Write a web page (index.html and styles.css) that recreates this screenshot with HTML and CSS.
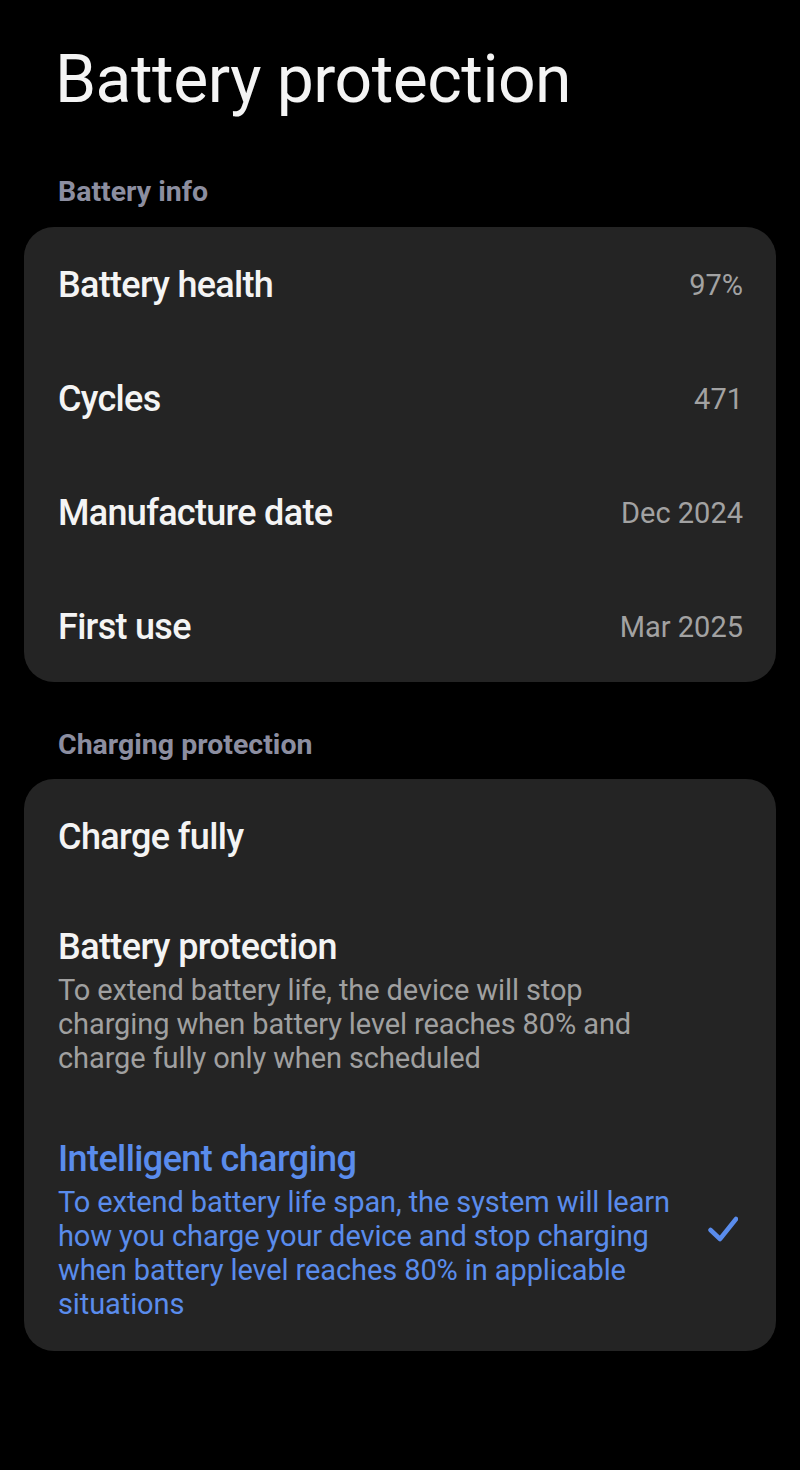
FILE: index.html
```html
<!DOCTYPE html>
<html lang="en">
<head>
<meta charset="utf-8">
<title>Battery protection</title>
<link rel="stylesheet" href="styles.css">
</head>
<body>
<main class="page">
  <h1 class="page-title">Battery protection</h1>

  <h2 class="section-label">Battery info</h2>
  <section class="card">
    <div class="info-row"><span class="info-name">Battery health</span><span class="info-value">97%</span></div>
    <div class="info-row"><span class="info-name">Cycles</span><span class="info-value">471</span></div>
    <div class="info-row"><span class="info-name">Manufacture date</span><span class="info-value">Dec 2024</span></div>
    <div class="info-row"><span class="info-name">First use</span><span class="info-value">Mar 2025</span></div>
  </section>

  <h2 class="section-label">Charging protection</h2>
  <section class="card">
    <div class="option option-single">
      <div class="option-text"><div class="option-title">Charge fully</div></div>
      <span class="check-slot"></span>
    </div>
    <div class="option">
      <div class="option-text">
        <div class="option-title">Battery protection</div>
        <div class="option-desc">To extend battery life, the device will stop charging when battery level reaches 80% and charge fully only when scheduled</div>
      </div>
      <span class="check-slot"></span>
    </div>
    <div class="option option-selected">
      <div class="option-text">
        <div class="option-title">Intelligent charging</div>
        <div class="option-desc">To extend battery life span, the system will learn how you charge your device and stop charging when battery level reaches 80% in applicable situations</div>
      </div>
      <span class="check-slot">
        <svg class="check" viewBox="0 0 32 28" width="32" height="28" aria-hidden="true">
          <path d="M4.5 14 L14 23 L30 3" fill="none" stroke="#5a8cec" stroke-width="4.5" stroke-linecap="round" stroke-linejoin="round"/>
        </svg>
      </span>
    </div>
  </section>
</main>
</body>
</html>
```

FILE: styles.css
```css
html, body {
  margin: 0;
  padding: 0;
  background: #000;
}
body {
  font-family: Roboto, "Noto Sans", "Liberation Sans", sans-serif;
  color: #f2f2f2;
  width: 800px;
  min-height: 1470px;
}
.page {
  padding: 40px 24px 0 24px;
  display: flex;
  flex-direction: column;
}
.page-title {
  margin: 0 0 0 31px;
  font-weight: 400;
  font-size: 66px;
  line-height: 80px;
  color: #f4f4f4;
  letter-spacing: -0.5px;
}
.section-label {
  margin: 0;
  padding: 0 34px;
  font-size: 28.5px;
  font-weight: 700;
  line-height: 34px;
  color: #8c8ea0;
}
.page-title + .section-label {
  margin-top: 55px;
  margin-bottom: 18px;
}
.card + .section-label {
  margin-top: 46px;
  margin-bottom: 17px;
}
.card {
  background: #242424;
  border-radius: 30px;
  display: flex;
  flex-direction: column;
}
.info-row {
  height: 114px;
  padding: 2px 33px 0 34px;
  box-sizing: border-box;
  display: flex;
  align-items: center;
  justify-content: space-between;
}
.info-row:last-child {
  height: 113px;
}
.info-name {
  font-size: 36px;
  font-weight: 500;
  color: #f4f4f4;
  letter-spacing: -0.7px;
}
.info-value {
  font-size: 29px;
  color: #a2a2a2;
}
.option {
  padding: 34px 34px 30px 34px;
  display: flex;
  align-items: center;
  gap: 24px;
}
.option-single {
  height: 114px;
  box-sizing: border-box;
  padding-top: 2px;
  padding-bottom: 0;
}
.option-text {
  flex: 1;
  min-width: 0;
}
.option-title {
  font-size: 36px;
  font-weight: 500;
  line-height: 40px;
  color: #f4f4f4;
  letter-spacing: -0.6px;
}
.option-desc {
  margin-top: 6px;
  font-size: 29px;
  line-height: 34px;
  color: #a0a0a0;
  letter-spacing: -0.1px;
}
.option-selected .option-title,
.option-selected .option-desc {
  color: #5a8cec;
}
.check-slot {
  flex: none;
  width: 32px;
  margin-right: 4px;
  display: flex;
  align-items: center;
}
.check {
  display: block;
}
```
